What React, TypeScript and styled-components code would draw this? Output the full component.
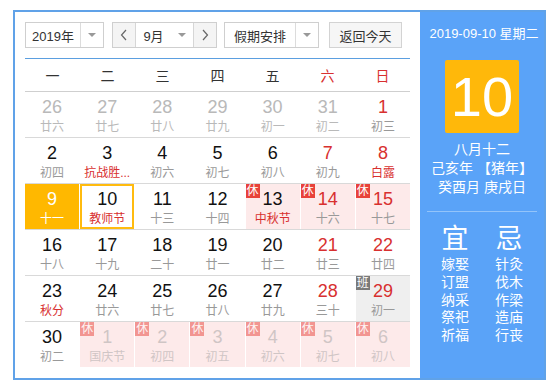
import styled, { createGlobalStyle, css } from 'styled-components'

const GlobalStyle = createGlobalStyle`
  html, body {
    margin: 0;
    padding: 0;
    background: #fff;
  }
  body {
    font-family: 'Liberation Sans', 'Noto Sans CJK SC', sans-serif;
  }
`

type Day = {
  d: number
  l: string
  other?: boolean
  red?: boolean
  fest?: boolean
  rest?: boolean
  work?: boolean
  selected?: boolean
  today?: boolean
}

const weeks: Day[][] = [
  [
    { d: 26, l: '廿六', other: true },
    { d: 27, l: '廿七', other: true },
    { d: 28, l: '廿八', other: true },
    { d: 29, l: '廿九', other: true },
    { d: 30, l: '初一', other: true },
    { d: 31, l: '初二', other: true },
    { d: 1, l: '初三', red: true },
  ],
  [
    { d: 2, l: '初四' },
    { d: 3, l: '抗战胜...', fest: true },
    { d: 4, l: '初六' },
    { d: 5, l: '初七' },
    { d: 6, l: '初八' },
    { d: 7, l: '初九', red: true },
    { d: 8, l: '白露', red: true, fest: true },
  ],
  [
    { d: 9, l: '十一', selected: true },
    { d: 10, l: '教师节', fest: true, today: true },
    { d: 11, l: '十三' },
    { d: 12, l: '十四' },
    { d: 13, l: '中秋节', fest: true, rest: true },
    { d: 14, l: '十六', red: true, rest: true },
    { d: 15, l: '十七', red: true, rest: true },
  ],
  [
    { d: 16, l: '十八' },
    { d: 17, l: '十九' },
    { d: 18, l: '二十' },
    { d: 19, l: '廿一' },
    { d: 20, l: '廿二' },
    { d: 21, l: '廿三', red: true },
    { d: 22, l: '廿四', red: true },
  ],
  [
    { d: 23, l: '秋分', fest: true },
    { d: 24, l: '廿六' },
    { d: 25, l: '廿七' },
    { d: 26, l: '廿八' },
    { d: 27, l: '廿九' },
    { d: 28, l: '三十', red: true },
    { d: 29, l: '初一', red: true, work: true },
  ],
  [
    { d: 30, l: '初二' },
    { d: 1, l: '国庆节', other: true, rest: true },
    { d: 2, l: '初四', other: true, rest: true },
    { d: 3, l: '初五', other: true, rest: true },
    { d: 4, l: '初六', other: true, rest: true },
    { d: 5, l: '初七', other: true, rest: true },
    { d: 6, l: '初八', other: true, rest: true },
  ],
]

const weekdays = ['一', '二', '三', '四', '五', '六', '日']

const yi = ['嫁娶', '订盟', '纳采', '祭祀', '祈福']
const ji = ['针灸', '伐木', '作梁', '造庙', '行丧']

const Widget = styled.div`
  display: flex;
  box-sizing: border-box;
  width: 533px;
  height: 370px;
  margin: 10px 0 0 13px;
  border: 2px solid #60a2e8;
`

const Main = styled.div`
  display: flex;
  flex-direction: column;
  width: 405px;
  box-sizing: border-box;
  padding: 10px;
`

const Toolbar = styled.div`
  display: flex;
  align-items: center;
  height: 26px;
  padding-bottom: 10px;
  border-bottom: 1px solid #5b9fe0;
`

const Select = styled.div<{ $w: number; $ml: number }>`
  display: flex;
  box-sizing: border-box;
  width: ${(p) => p.$w}px;
  height: 26px;
  margin-left: ${(p) => p.$ml}px;
  border: 1px solid #cfcfcf;
  background: #fff;
  font-size: 13px;
  color: #333;
`

const SelectText = styled.div`
  flex: 1;
  display: flex;
  align-items: center;
  justify-content: center;
`

const Caret = styled.div<{ $divider?: boolean }>`
  display: flex;
  align-items: center;
  justify-content: center;
  width: 22px;
  border-left: ${(p) => (p.$divider ? '1px solid #dcdcdc' : 'none')};

  &::after {
    content: '';
    border-left: 4px solid transparent;
    border-right: 4px solid transparent;
    border-top: 4px solid #999;
  }
`

const Step = styled.div<{ $side: 'l' | 'r' }>`
  display: flex;
  align-items: center;
  justify-content: center;
  width: 22px;
  background: #f4f4f4;
  ${(p) => (p.$side === 'l' ? 'border-right: 1px solid #d6d6d6;' : 'border-left: 1px solid #d6d6d6;')}
`

const TodayButton = styled.div`
  display: flex;
  align-items: center;
  justify-content: center;
  box-sizing: border-box;
  width: 73px;
  height: 26px;
  margin-left: 10px;
  border: 1px solid #d3d3d3;
  background: #f6f6f6;
  font-size: 13px;
  color: #333;
`

const HeadRow = styled.div`
  display: grid;
  grid-template-columns: repeat(7, 1fr);
  height: 32px;
  border-bottom: 1px solid #cfcfcf;
`

const HeadCell = styled.div<{ $red: boolean }>`
  display: flex;
  align-items: center;
  justify-content: center;
  font-size: 14px;
  color: ${(p) => (p.$red ? '#d8302f' : '#333')};
`

const WeekRow = styled.div<{ $last: boolean }>`
  display: grid;
  grid-template-columns: repeat(7, 1fr);
  column-gap: 1px;
  height: 46px;
  box-sizing: border-box;
  border-bottom: ${(p) => (p.$last ? '1px solid transparent' : '1px solid #d9d9d9')};
`

const Cell = styled.div<{ $rest?: boolean; $work?: boolean; $selected?: boolean; $today?: boolean }>`
  position: relative;
  display: flex;
  flex-direction: column;
  align-items: center;
  box-sizing: border-box;
  padding-top: 5px;
  min-width: 0;
  background: #fff;
  ${(p) => p.$rest && 'background: #fdeaea;'}
  ${(p) => p.$work && 'background: #efefef;'}
  ${(p) => p.$selected && 'background: #ffb800;'}
  ${(p) =>
    p.$today &&
    css`
      border: 2px solid #ffbb0f;
      padding-top: 3px;
    `}
`

const Inner = styled.div<{ $faded?: boolean }>`
  display: flex;
  flex-direction: column;
  align-items: center;
  width: 100%;
  opacity: ${(p) => (p.$faded ? 0.45 : 1)};
`

const Num = styled.div<{ $color: string }>`
  font-size: 18px;
  line-height: 21px;
  color: ${(p) => p.$color};
`

const Lunar = styled.div<{ $color: string }>`
  margin-top: 1px;
  font-size: 12px;
  line-height: 16px;
  color: ${(p) => p.$color};
  white-space: nowrap;
`

const Badge = styled.div<{ $work?: boolean; $faded?: boolean }>`
  position: absolute;
  left: 0;
  top: 0;
  width: 14px;
  height: 14px;
  font-size: 12px;
  line-height: 14px;
  text-align: center;
  color: #fff;
  background: ${(p) => (p.$work ? '#7a7a7a' : '#e8423a')};
  opacity: ${(p) => (p.$faded ? 0.5 : 1)};
`

const Side = styled.div`
  display: flex;
  flex-direction: column;
  align-items: center;
  flex: 1;
  background: #5aa3f8;
  color: #fff;
  padding-top: 13px;
`

const SideDate = styled.div`
  font-size: 13px;
  line-height: 18px;
  margin-left: 4px;
`

const BigDay = styled.div`
  display: flex;
  align-items: center;
  justify-content: center;
  width: 74px;
  height: 73px;
  margin-top: 17px;
  border-radius: 2px;
  background: #ffb80a;
  font-family: 'Liberation Sans', Arial, sans-serif;
  font-size: 56px;
  color: #fff;
`

const LunarInfo = styled.div`
  margin-top: 7px;
  font-size: 14px;
  line-height: 19px;
  text-align: center;
`

const Divider = styled.div`
  width: 110px;
  height: 1px;
  margin-top: 14px;
  background: #93c4fa;
`

const Almanac = styled.div`
  display: grid;
  grid-template-columns: 54px 54px;
  margin-top: 12px;
`

const AlmanacCol = styled.div`
  display: flex;
  flex-direction: column;
  align-items: center;
`

const AlmanacTitle = styled.div`
  font-size: 27px;
  line-height: 30px;
  margin-bottom: 2px;
`

const AlmanacItem = styled.div`
  font-size: 14px;
  line-height: 17.8px;
`

const Chevron = ({ dir }: { dir: 'l' | 'r' }) => (
  <svg width="8" height="12" viewBox="0 0 8 12">
    <polyline
      points={dir === 'l' ? '6,1 1.5,6 6,11' : '2,1 6.5,6 2,11'}
      fill="none"
      stroke="#666"
      strokeWidth="1.2"
    />
  </svg>
)

const numColor = (c: Day) => {
  if (c.other && c.rest) return '#999'
  if (c.selected) return '#fff'
  if (c.other) return '#b9b9b9'
  if (c.red) return '#d8302f'
  return '#111'
}

const lunarColor = (c: Day) => {
  if (c.other && c.rest) return '#999'
  if (c.selected) return '#fff'
  if (c.other) return '#b9b9b9'
  if (c.fest) return '#d8302f'
  return '#999'
}

export default function App() {
  return (
    <>
      <GlobalStyle />
      <Widget>
        <Main>
          <Toolbar>
            <Select $w={79} $ml={0}>
              <SelectText>2019年</SelectText>
              <Caret $divider />
            </Select>
            <Select $w={105} $ml={8}>
              <Step $side="l">
                <Chevron dir="l" />
              </Step>
              <SelectText>9月</SelectText>
              <Caret />
              <Step $side="r">
                <Chevron dir="r" />
              </Step>
            </Select>
            <Select $w={95} $ml={7}>
              <SelectText>假期安排</SelectText>
              <Caret $divider />
            </Select>
            <TodayButton>返回今天</TodayButton>
          </Toolbar>
          <HeadRow>
            {weekdays.map((w, i) => (
              <HeadCell key={w} $red={i >= 5}>
                {w}
              </HeadCell>
            ))}
          </HeadRow>
          {weeks.map((week, wi) => (
            <WeekRow key={wi} $last={wi === weeks.length - 1}>
              {week.map((c, ci) => (
                <Cell key={ci} $rest={c.rest} $work={c.work} $selected={c.selected} $today={c.today}>
                  {c.rest && <Badge $faded={c.other}>休</Badge>}
                  {c.work && <Badge $work>班</Badge>}
                  <Inner $faded={c.other && c.rest}>
                    <Num $color={numColor(c)}>{c.d}</Num>
                    <Lunar $color={lunarColor(c)}>{c.l}</Lunar>
                  </Inner>
                </Cell>
              ))}
            </WeekRow>
          ))}
        </Main>
        <Side>
          <SideDate>2019-09-10 星期二</SideDate>
          <BigDay>10</BigDay>
          <LunarInfo>
            八月十二
            <br />
            己亥年 【猪年】
            <br />
            癸酉月 庚戌日
          </LunarInfo>
          <Divider />
          <Almanac>
            <AlmanacCol>
              <AlmanacTitle>宜</AlmanacTitle>
              {yi.map((t) => (
                <AlmanacItem key={t}>{t}</AlmanacItem>
              ))}
            </AlmanacCol>
            <AlmanacCol>
              <AlmanacTitle>忌</AlmanacTitle>
              {ji.map((t) => (
                <AlmanacItem key={t}>{t}</AlmanacItem>
              ))}
            </AlmanacCol>
          </Almanac>
        </Side>
      </Widget>
    </>
  )
}
